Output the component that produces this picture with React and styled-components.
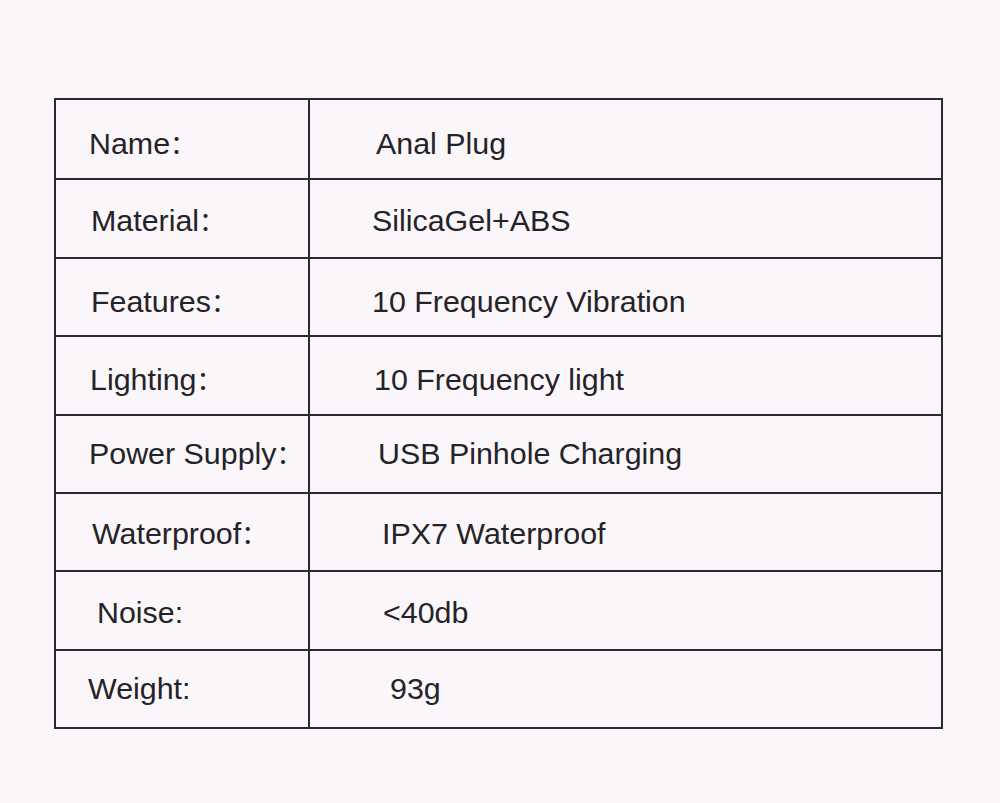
import React from 'react';
import styled, { createGlobalStyle } from 'styled-components';

const GlobalStyle = createGlobalStyle`
  html, body {
    margin: 0;
    padding: 0;
    background: #faf6f9;
  }
  body {
    font-family: "Liberation Sans", Arial, "Noto Sans CJK SC", sans-serif;
    color: #242327;
  }
`;

const Page = styled.div`
  width: 1000px;
  height: 803px;
  padding: 98px 0 0 54px;
  box-sizing: border-box;
`;

const Table = styled.div`
  width: 889px;
  height: 631px;
  box-sizing: border-box;
  border: 2px solid #2b2a2e;
  display: grid;
  grid-template-rows: repeat(8, 1fr);
`;

const Row = styled.div`
  display: grid;
  grid-template-columns: 254px 1fr;
  border-top: ${(p) => (p.first ? 'none' : '2px solid #2b2a2e')};
  min-height: 0;
`;

const Cell = styled.div`
  display: flex;
  align-items: center;
  padding-left: ${(p) => p.indent}px;
  font-size: 30.4px;
  line-height: 1;
  white-space: nowrap;
`;

const Label = styled(Cell)`
  border-right: 2px solid #2b2a2e;
`;

const Text = styled.span`
  transform: translateY(${(p) => p.shift || 0}px);
`;

const Colon = styled.span`
  font-family: "Noto Sans CJK SC", sans-serif;
  font-size: 26px;
`;

const specs = [
  { name: 'Name', wide: true, value: 'Anal Plug', li: 33, vi: 66, shift: 4 },
  { name: 'Material', wide: true, value: 'SilicaGel+ABS', li: 35, vi: 62, shift: 2 },
  { name: 'Features', wide: true, value: '10 Frequency Vibration', li: 35, vi: 62, shift: 3.5 },
  { name: 'Lighting', wide: true, value: '10 Frequency light', li: 34, vi: 64, shift: 4 },
  { name: 'Power Supply', wide: true, value: 'USB Pinhole Charging', li: 33, vi: 68, shift: 0 },
  { name: 'Waterproof', wide: true, value: 'IPX7 Waterproof', li: 36, vi: 72, shift: 1 },
  { name: 'Noise', wide: false, value: '<40db', li: 41, vi: 73, shift: 2 },
  { name: 'Weight', wide: false, value: '93g', li: 32, vi: 80, shift: -1 },
];

export default function App() {
  return (
    <>
      <GlobalStyle />
      <Page>
        <Table>
          {specs.map((s, i) => (
            <Row key={s.name} first={i === 0}>
              <Label indent={s.li}>
                <Text shift={s.shift}>
                  {s.name}
                  {s.wide ? <Colon>：</Colon> : ':'}
                </Text>
              </Label>
              <Cell indent={s.vi}>
                <Text shift={s.shift}>{s.value}</Text>
              </Cell>
            </Row>
          ))}
        </Table>
      </Page>
    </>
  );
}
